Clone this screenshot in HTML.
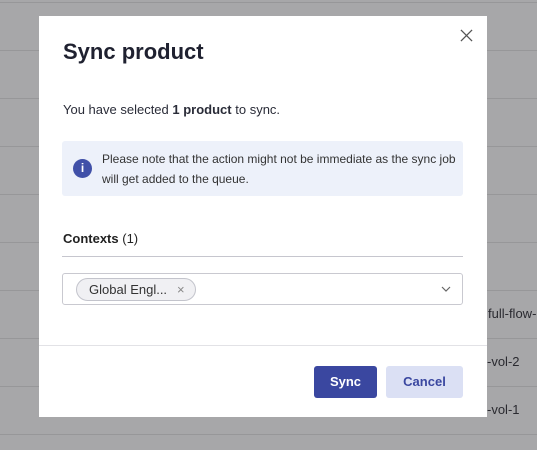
<!DOCTYPE html>
<html><head><style>
*{margin:0;padding:0;box-sizing:border-box}
body{width:537px;height:450px;overflow:hidden;background:#a7a7a9;font-family:"Liberation Sans",sans-serif;position:relative;color:#1a1c2b}
.line{position:absolute;left:0;width:537px;height:1px;background:#979799}
.bgt{position:absolute;font-size:13px;color:#2a2a30}
.modal{position:absolute;left:39px;top:16px;width:448px;height:401px;background:#fff}
.a{position:absolute}
</style></head><body>
<div class="line" style="top:2px"></div>
<div class="line" style="top:50px"></div>
<div class="line" style="top:98px"></div>
<div class="line" style="top:146px"></div>
<div class="line" style="top:194px"></div>
<div class="line" style="top:242px"></div>
<div class="line" style="top:290px"></div>
<div class="line" style="top:338px"></div>
<div class="line" style="top:386px"></div>
<div class="line" style="top:434px"></div>
<div class="bgt" style="top:306px;left:488px">full-flow-</div>
<div class="bgt" style="top:354px;left:487px">-vol-2</div>
<div class="bgt" style="top:402px;left:487px">-vol-1</div>
<div class="modal">
  <div class="a" style="left:24px;top:23px;font-size:22px;font-weight:bold;color:#1f2130">Sync product</div>
  <svg class="a" style="left:421px;top:13px" width="13" height="13" viewBox="0 0 14 14"><path d="M1 1L13 13M13 1L1 13" stroke="#555" stroke-width="1.4"/></svg>
  <div class="a" style="left:24px;top:86px;font-size:13px;color:#2a2c38">You have selected <b>1 product</b> to sync.</div>
  <div class="a" style="left:23px;top:125px;width:401px;height:55px;background:#edf1fa;border-radius:3px"></div>
  <div class="a" style="left:34px;top:143px;width:19px;height:19px;border-radius:50%;background:#4050a8;color:#fff;font-size:12px;font-weight:bold;text-align:center;line-height:19px">i</div>
  <div class="a" style="left:63px;top:133px;font-size:12px;line-height:20px;color:#333">Please note that the action might not be immediate as the sync job<br>will get added to the queue.</div>
  <div class="a" style="left:24px;top:215px;font-size:13px;color:#222"><b>Contexts</b> (1)</div>
  <div class="a" style="left:23px;top:240px;width:401px;height:1px;background:#c6c6ce"></div>
  <div class="a" style="left:23px;top:257px;width:401px;height:32px;border:1px solid #c9c9d0;border-radius:3px"></div>
  <div class="a" style="left:37px;top:262px;width:120px;height:23px;border:1px solid #c3c4cc;border-radius:12px;background:#f0f0f3;font-size:13px;line-height:21px;padding-left:12px;color:#333">Global Engl... <span style="position:absolute;left:100px;color:#888">×</span></div>
  <svg class="a" style="left:402px;top:270px" width="10" height="6" viewBox="0 0 10 6"><path d="M1 1L5 5L9 1" fill="none" stroke="#666" stroke-width="1.2"/></svg>
  <div class="a" style="left:0;top:329px;width:448px;height:1px;background:#e2e2e6"></div>
  <div class="a" style="left:275px;top:350px;width:63px;height:32px;background:#3a47a0;border-radius:3px;color:#fff;font-size:13px;font-weight:bold;text-align:center;line-height:32px">Sync</div>
  <div class="a" style="left:347px;top:350px;width:77px;height:32px;background:#dbe0f4;border-radius:3px;color:#3a47a0;font-size:13px;font-weight:bold;text-align:center;line-height:32px">Cancel</div>
</div>
</body></html>
